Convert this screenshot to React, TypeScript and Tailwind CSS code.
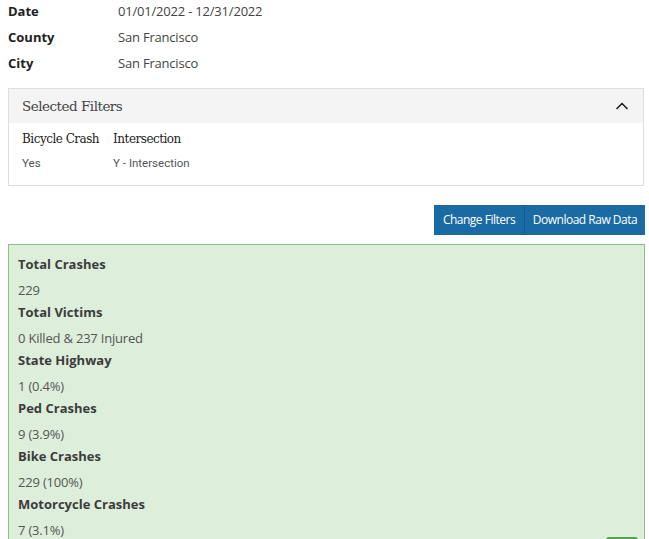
import { ChevronUp } from "lucide-react";

const criteria = [
  { label: "Date", value: "01/01/2022 - 12/31/2022" },
  { label: "County", value: "San Francisco" },
  { label: "City", value: "San Francisco" },
];

const stats = [
  { label: "Total Crashes", value: "229" },
  { label: "Total Victims", value: "0 Killed & 237 Injured" },
  { label: "State Highway", value: "1 (0.4%)" },
  { label: "Ped Crashes", value: "9 (3.9%)" },
  { label: "Bike Crashes", value: "229 (100%)" },
  { label: "Motorcycle Crashes", value: "7 (3.1%)" },
];

export default function App() {
  return (
    <div className="w-[649px] h-[539px] overflow-hidden bg-white font-['Open_Sans',sans-serif] text-[#333]">
      <div className="pl-2 -mt-[1px]">
        {criteria.map((row) => (
          <div className="flex h-[26px] items-center text-[13px]" key={row.label}>
            <span className="w-[110px] font-bold text-[#222]">{row.label}</span>
            <span className="text-[#444] tracking-[-0.2px]">{row.value}</span>
          </div>
        ))}
      </div>

      <div className="ml-2 mt-[11px] w-[636px] border border-[#dedede]">
        <div className="flex h-[34px] items-center justify-between bg-[#f4f4f4] pl-[13px] pr-[11px]">
          <span className="font-['DejaVu_Serif',serif] text-[13.5px] tracking-[-0.5px] text-[#444]">Selected Filters</span>
          <ChevronUp className="h-[20px] w-[20px] text-[#222]" strokeWidth={2} />
        </div>
        <div className="flex gap-[14px] px-[13px] pb-[10px] pt-[4px]">
          <div>
            <div className="font-['DejaVu_Serif',serif] text-[12px] tracking-[-0.5px] leading-[24px] text-[#222]">Bicycle Crash</div>
            <div className="font-['Roboto',sans-serif] text-[11.5px] leading-[24px] text-[#555]">Yes</div>
          </div>
          <div>
            <div className="font-['DejaVu_Serif',serif] text-[12px] tracking-[-0.5px] leading-[24px] text-[#222]">Intersection</div>
            <div className="font-['Roboto',sans-serif] text-[11.5px] leading-[24px] text-[#555]">Y - Intersection</div>
          </div>
        </div>
      </div>

      <div className="mt-[19px] flex justify-end pr-1">
        <div className="flex h-[30px] text-[12px] text-white tracking-[-0.5px]">
          <button className="w-[91px] bg-[#1a6aa3] border-r border-[#125a8c]" type="button">Change Filters</button>
          <button className="w-[120px] bg-[#1a6aa3]" type="button">Download Raw Data</button>
        </div>
      </div>

      <div className="relative ml-2 mt-[9px] h-[300px] w-[637px] border border-[#8cc08a] bg-[#ddeedb] px-[9px] pt-[8px]">
        {stats.map((stat) => (
          <div key={stat.label}>
            <div className="h-[22px] text-[13px] font-bold leading-[22px] text-[#3c3c3c]">{stat.label}</div>
            <div className="h-[26px] pt-[4px] text-[13px] leading-[22px] text-[#555] tracking-[-0.2px]">{stat.value}</div>
          </div>
        ))}
        <div className="absolute right-[6px] top-[292px] h-[8px] w-[32px] rounded-t-[3px] bg-[#5a9e57]" />
      </div>
    </div>
  );
}
